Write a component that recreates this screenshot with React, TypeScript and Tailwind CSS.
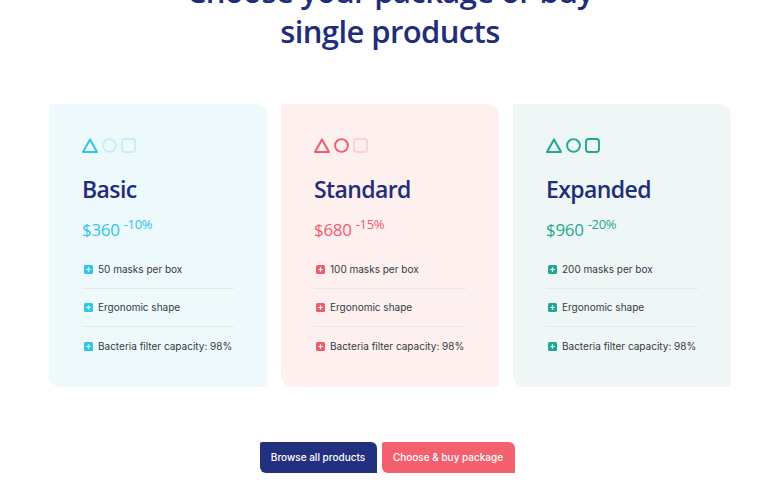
import React from "react";

type Plan = {
  name: string;
  price: string;
  off: string;
  color: string;
  faded: string;
  bg: string;
  active: number;
  items: string[];
};

const plans: Plan[] = [
  {
    name: "Basic",
    price: "$360",
    off: "-10%",
    color: "#2cc6e8",
    faded: "#c6eef8",
    bg: "#eef9fc",
    active: 1,
    items: ["50 masks per box", "Ergonomic shape", "Bacteria filter capacity: 98%"],
  },
  {
    name: "Standard",
    price: "$680",
    off: "-15%",
    color: "#f35a6b",
    faded: "#fbd3d4",
    bg: "#fdf0ef",
    active: 2,
    items: ["100 masks per box", "Ergonomic shape", "Bacteria filter capacity: 98%"],
  },
  {
    name: "Expanded",
    price: "$960",
    off: "-20%",
    color: "#1fa890",
    faded: "#bfe6de",
    bg: "#eef7f5",
    active: 3,
    items: ["200 masks per box", "Ergonomic shape", "Bacteria filter capacity: 98%"],
  },
];

const HEAD = "'Open Sans', Lato, sans-serif";

function Shapes({ p }: { p: Plan }) {
  const c = (i: number) => (i < p.active ? p.color : p.faded);
  return (
    <div className="flex items-center gap-[4px]">
      <svg width="16" height="15" viewBox="0 0 16 15">
        <path d="M8 1.4 L15 13.9 L1 13.9 Z" fill="none" stroke={c(0)} strokeWidth="2" strokeLinejoin="round" />
      </svg>
      <svg width="15" height="15" viewBox="0 0 15 15">
        <circle cx="7.5" cy="7.5" r="6.4" fill="none" stroke={c(1)} strokeWidth="1.9" />
      </svg>
      <svg width="15" height="15" viewBox="0 0 15 15">
        <rect x="1" y="1" width="13" height="13" rx="2.5" fill="none" stroke={c(2)} strokeWidth="1.9" />
      </svg>
    </div>
  );
}

function Bullet({ color }: { color: string }) {
  return (
    <svg width="9" height="9" viewBox="0 0 9 9" className="shrink-0">
      <rect x="0" y="0" width="9" height="9" rx="1.5" fill={color} />
      <path d="M4.5 2.3 V6.7 M2.3 4.5 H6.7" stroke="#fff" strokeWidth="1.2" />
    </svg>
  );
}

function Card({ p }: { p: Plan }) {
  return (
    <div
      className="w-[218px] h-[283px] rounded-tr-[12px] rounded-bl-[12px] pl-[33px] pr-[33px] pt-[34px]"
      style={{ backgroundColor: p.bg }}
    >
      <Shapes p={p} />
      <div
        className="mt-[21px] text-[23px] leading-[30px] font-semibold text-[#1f2d7b] tracking-[-0.6px]"
        style={{ fontFamily: HEAD }}
      >
        {p.name}
      </div>
      <div
        className="mt-[14px] flex items-start leading-[20px] font-medium"
        style={{ color: p.color, fontFamily: HEAD }}
      >
        <span className="text-[17px] mt-[2px] tracking-[-0.3px]">{p.price}</span>
        <span className="text-[13px] ml-[4px] -mt-[4px] tracking-[-0.3px]">{p.off}</span>
      </div>
      <ul className="mt-[11px] w-[152px] text-[10px] text-[#333a44]" style={{ fontFamily: "Inter, sans-serif" }}>
        {p.items.map((it, i) => (
          <li
            key={it}
            className={
              "flex items-center gap-[5px] pl-[2px] h-[38px] " +
              (i < p.items.length - 1 ? "border-b border-[#e3e8ea]" : "")
            }
          >
            <Bullet color={p.color} />
            <span className="whitespace-nowrap">{it}</span>
          </li>
        ))}
      </ul>
    </div>
  );
}

export default function App() {
  return (
    <div className="w-[780px] h-[500px] overflow-hidden bg-white">
      <h1
        className="-mt-[29px] text-center text-[31px] leading-[40px] font-semibold text-[#1f2d7b] tracking-[-0.6px]"
        style={{ fontFamily: HEAD }}
      >
        Choose your package or buy
        <br />
        single products
      </h1>
      <div className="mt-[53px] flex justify-center gap-[14px]">
        {plans.map((p) => (
          <Card key={p.name} p={p} />
        ))}
      </div>
      <div className="mt-[55px] flex justify-center gap-[5px] pr-[6px]" style={{ fontFamily: "Inter, sans-serif" }}>
        <button className="h-[31px] w-[117px] rounded-tr-[6px] rounded-bl-[6px] rounded-tl-[2px] bg-[#22307f] text-white text-[10px] font-medium">
          Browse all products
        </button>
        <button className="h-[31px] w-[133px] rounded-tr-[6px] rounded-bl-[6px] rounded-tl-[2px] bg-[#f5606e] text-white text-[10px] font-medium">
          Choose &amp; buy package
        </button>
      </div>
    </div>
  );
}
